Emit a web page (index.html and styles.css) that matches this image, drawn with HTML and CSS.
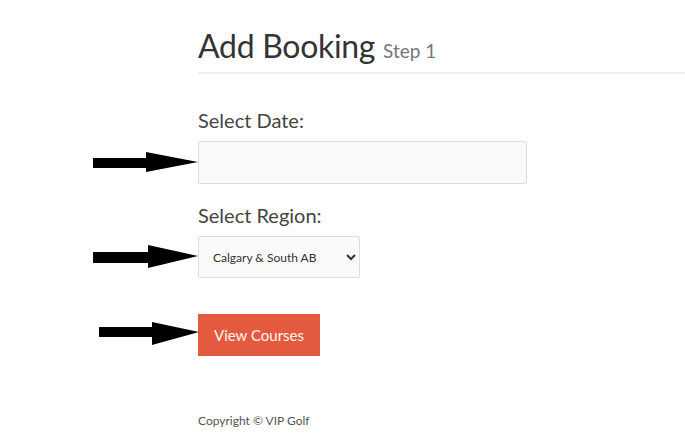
FILE: index.html
```html
<!DOCTYPE html>
<html>
<head>
<meta charset="utf-8">
<link rel="stylesheet" href="styles.css">
</head>
<body>
<div class="page">
  <div class="header">
    <h1 class="title">Add Booking <small class="step">Step 1</small></h1>
  </div>
  <form class="form">
    <div class="group">
      <label class="label">Select Date:</label>
      <input class="date-input" type="text">
    </div>
    <div class="group">
      <label class="label">Select Region:</label>
      <select class="region-select">
        <option>Calgary &amp; South AB</option>
      </select>
    </div>
    <button type="button" class="btn">View Courses</button>
  </form>
  <footer class="footer">Copyright © VIP Golf</footer>

  <svg class="arrow arrow-1" width="110" height="24" viewBox="0 0 110 24"><path d="M0 6 H53 V0 L105 10 L53 20 V16 H0 Z" fill="#000"/></svg>
  <svg class="arrow arrow-2" width="110" height="24" viewBox="0 0 110 24"><path d="M0 7 H55 V0 L105 11 L55 23 V18 H0 Z" fill="#000"/></svg>
  <svg class="arrow arrow-3" width="110" height="24" viewBox="0 0 110 24"><path d="M0 5 H53 V0 L100 10 L53 23 V15 H0 Z" fill="#000"/></svg>
</div>
</body>
</html>
```
FILE: styles.css
```css
html, body {
  margin: 0;
  padding: 0;
  background: #fff;
}
body {
  font-family: "Open Sans", "Noto Sans", sans-serif;
  color: #333;
}
.page {
  position: relative;
  padding-left: 198px;
  height: 445px;
  overflow: hidden;
}
.header {
  padding-top: 26px;
  border-bottom: 2px solid #eee;
  padding-bottom: 1px;
}
.title {
  margin: 0;
  font-family: "Lato", sans-serif;
  font-weight: 400;
  font-size: 32px;
  line-height: 40px;
  color: #333;
  letter-spacing: -0.3px;
}
.step {
  font-size: 19px;
  color: #777;
  letter-spacing: 0;
}
.form {
  padding-top: 33px;
}
.group {
  display: flex;
  flex-direction: column;
  align-items: flex-start;
  margin-bottom: 18px;
}
.label {
  font-family: "Lato", sans-serif;
  font-size: 20px;
  line-height: 26px;
  color: #444;
  margin-bottom: 8px;
}
.date-input {
  box-sizing: border-box;
  width: 329px;
  height: 43px;
  background: #f9f9f9;
  border: 1px solid #ddd;
  border-radius: 2px;
}
.region-select {
  box-sizing: border-box;
  width: 162px;
  height: 42px;
  background: #fafafa;
  border: 1px solid #ddd;
  border-radius: 2px;
  font-family: "Lato", sans-serif;
  font-size: 12px;
  color: #333;
  padding-left: 10px;
}
.btn {
  margin-top: 18px;
  width: 122px;
  height: 42px;
  border: none;
  border-radius: 0;
  background: #e35a3f;
  color: #fff5ef;
  font-family: "Lato", sans-serif;
  font-size: 15px;
}
.footer {
  margin-top: 57px;
  font-family: "Lato", sans-serif;
  font-size: 12px;
  color: #555;
}
.arrow {
  position: absolute;
}
.arrow-1 { left: 93px; top: 152px; }
.arrow-2 { left: 93px; top: 245px; }
.arrow-3 { left: 99px; top: 322px; }
```
